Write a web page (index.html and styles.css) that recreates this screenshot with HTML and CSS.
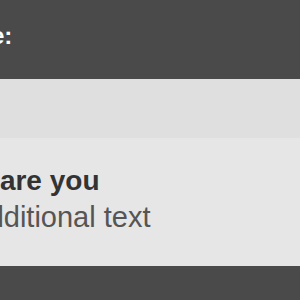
FILE: index.html
```html
<!DOCTYPE html>
<html lang="en">
<head>
    <meta charset="UTF-8">
    <meta name="viewport" content="width=device-width, initial-scale=1.0">
    <title>Question</title>
    <link rel="stylesheet" href="styles.css">
</head>
<body>
    <div class="page">
        <div class="header">
            <h2 class="label">Name:</h2>
        </div>
        <div class="search"></div>
        <ul class="list">
            <li class="row">
                <h3 class="title">How are you</h3>
                <p class="sub">An additional text</p>
            </li>
        </ul>
    </div>
</body>
</html>
```

FILE: styles.css
```css
*{
    padding: 0px;
    margin: 0px;
    box-sizing: border-box;
    font-family: "Liberation Sans", Arial, sans-serif;
}
body{
    width: 300px;
    height: 300px;
    overflow: hidden;
    background-color: #4a4a4a;
}
.page{
    width: 300px;
}
.header{
    height: 79px;
    padding-top: 21px;
}
.label{
    color: white;
    font-size: 24px;
    line-height: 30px;
    font-weight: bold;
    margin-left: -61px;
    white-space: nowrap;
}
.search{
    height: 59px;
    background-color: #dfdfdf;
}
.list{
    list-style: none;
}
.row{
    height: 128px;
    background-color: #e6e6e6;
    padding-top: 26px;
    white-space: nowrap;
}
.title{
    font-size: 28px;
    line-height: 34px;
    font-weight: bold;
    color: #333;
    margin-left: -67px;
}
.sub{
    font-size: 29px;
    line-height: 36px;
    color: #555;
    margin-left: -72px;
    margin-top: 1px;
}
```
